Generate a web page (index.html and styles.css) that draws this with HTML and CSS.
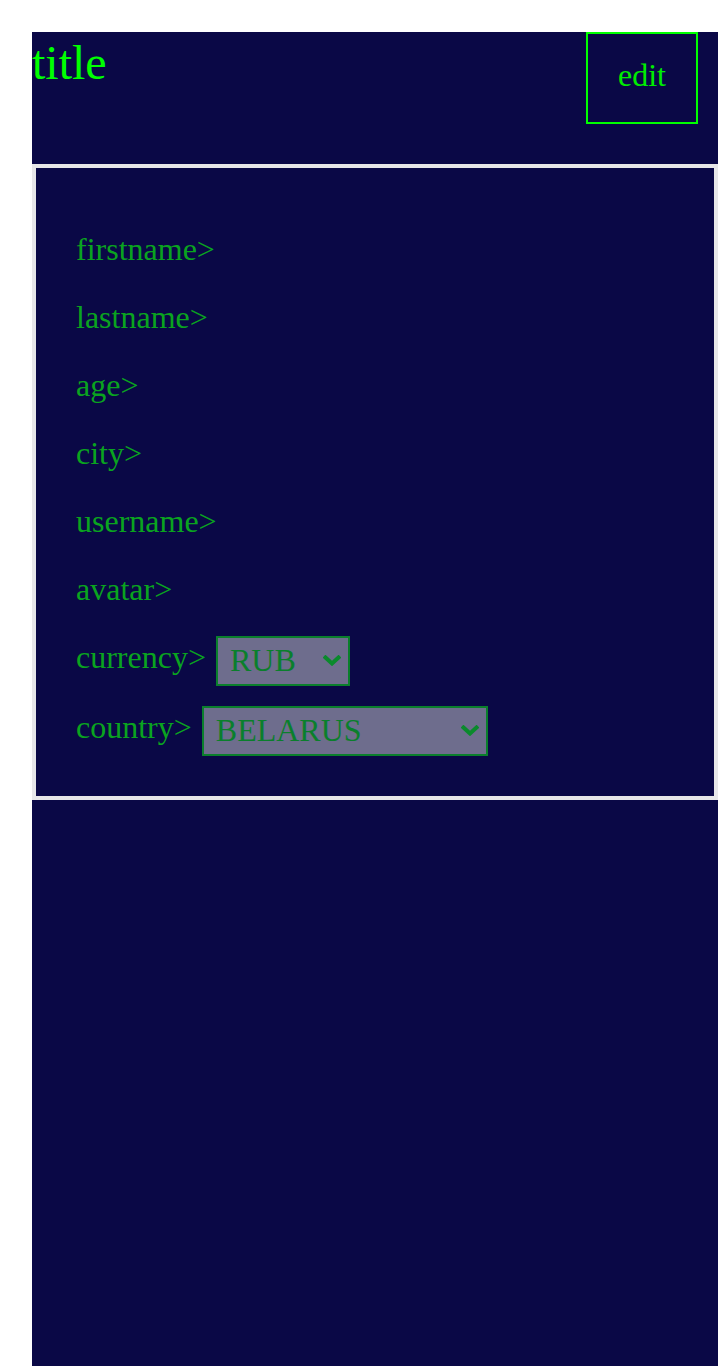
FILE: index.html
```html
<!DOCTYPE html>
<html lang="en">
<head>
<meta charset="utf-8">
<title>Profile</title>
<link rel="stylesheet" href="styles.css">
</head>
<body>
<div class="app">
  <header class="header">
    <h1 class="title">title</h1>
    <button class="edit-btn" type="button">edit</button>
  </header>
  <section class="card">
    <div class="row"><span class="label">firstname&gt;</span></div>
    <div class="row"><span class="label">lastname&gt;</span></div>
    <div class="row"><span class="label">age&gt;</span></div>
    <div class="row"><span class="label">city&gt;</span></div>
    <div class="row"><span class="label">username&gt;</span></div>
    <div class="row"><span class="label">avatar&gt;</span></div>
    <div class="row row--select row--first-select">
      <span class="label">currency&gt;</span>
      <div class="select-wrap select-wrap--currency">
        <select class="select">
          <option>RUB</option>
          <option>EUR</option>
          <option>USD</option>
        </select>
        <svg class="chevron" width="18" height="11" viewBox="0 0 18 11" aria-hidden="true"><path d="M2.5 2.5 L9 8.5 L15.5 2.5" fill="none" stroke="#0a8a2c" stroke-width="4" stroke-linecap="square"/></svg>
      </div>
    </div>
    <div class="row row--select">
      <span class="label">country&gt;</span>
      <div class="select-wrap select-wrap--country">
        <select class="select">
          <option>BELARUS</option>
          <option>RUSSIA</option>
          <option>KAZAKHSTAN</option>
        </select>
        <svg class="chevron" width="18" height="11" viewBox="0 0 18 11" aria-hidden="true"><path d="M2.5 2.5 L9 8.5 L15.5 2.5" fill="none" stroke="#0a8a2c" stroke-width="4" stroke-linecap="square"/></svg>
      </div>
    </div>
  </section>
</div>
</body>
</html>
```

FILE: styles.css
```css
html, body {
  margin: 0;
  padding: 0;
  background: #ffffff;
}

body {
  font-family: "Liberation Serif", "Times New Roman", serif;
}

.app {
  margin: 32px 0 0 32px;
  min-height: calc(100vh - 32px);
  background: #0a0846;
  display: flex;
  flex-direction: column;
}

.header {
  display: flex;
  justify-content: space-between;
  align-items: flex-start;
  padding: 0 20px 40px 0;
}

.title {
  margin: 3px 0 0 0;
  font-size: 48px;
  font-weight: normal;
  line-height: normal;
  color: #00ff00;
}

.edit-btn {
  box-sizing: border-box;
  width: 112px;
  height: 92px;
  padding: 0 0 6px 0;
  margin: 0;
  background: transparent;
  border: 2px solid #00ff00;
  color: #00ee00;
  font-family: "Liberation Serif", "Times New Roman", serif;
  font-size: 32px;
  line-height: normal;
  cursor: pointer;
}

.card {
  border: 4px solid #e7e7e9;
  padding: 57px 40px 40px 40px;
  display: flex;
  flex-direction: column;
  gap: 20px;
}

.row {
  display: flex;
  align-items: center;
  gap: 10px;
  height: 48px;
}

.row--select {
  height: 50px;
}

.row--first-select {
  margin-top: 3px;
}

.label {
  font-size: 32px;
  line-height: normal;
  color: #0aa41f;
}

.row--select .label {
  margin-bottom: 8px;
}

.select-wrap {
  position: relative;
  height: 50px;
}

.select-wrap--currency {
  width: 134px;
}

.select-wrap--country {
  width: 286px;
}

.select {
  appearance: none;
  -webkit-appearance: none;
  box-sizing: border-box;
  width: 100%;
  height: 50px;
  margin: 0;
  padding: 0 30px 2px 12px;
  border: 2px solid #0a7f2c;
  border-radius: 0;
  background: #6e6d8d;
  color: #0a7f2c;
  font-family: "Liberation Serif", "Times New Roman", serif;
  font-size: 32px;
  outline: none;
}

.chevron {
  position: absolute;
  right: 9px;
  top: 19px;
  pointer-events: none;
}
```
